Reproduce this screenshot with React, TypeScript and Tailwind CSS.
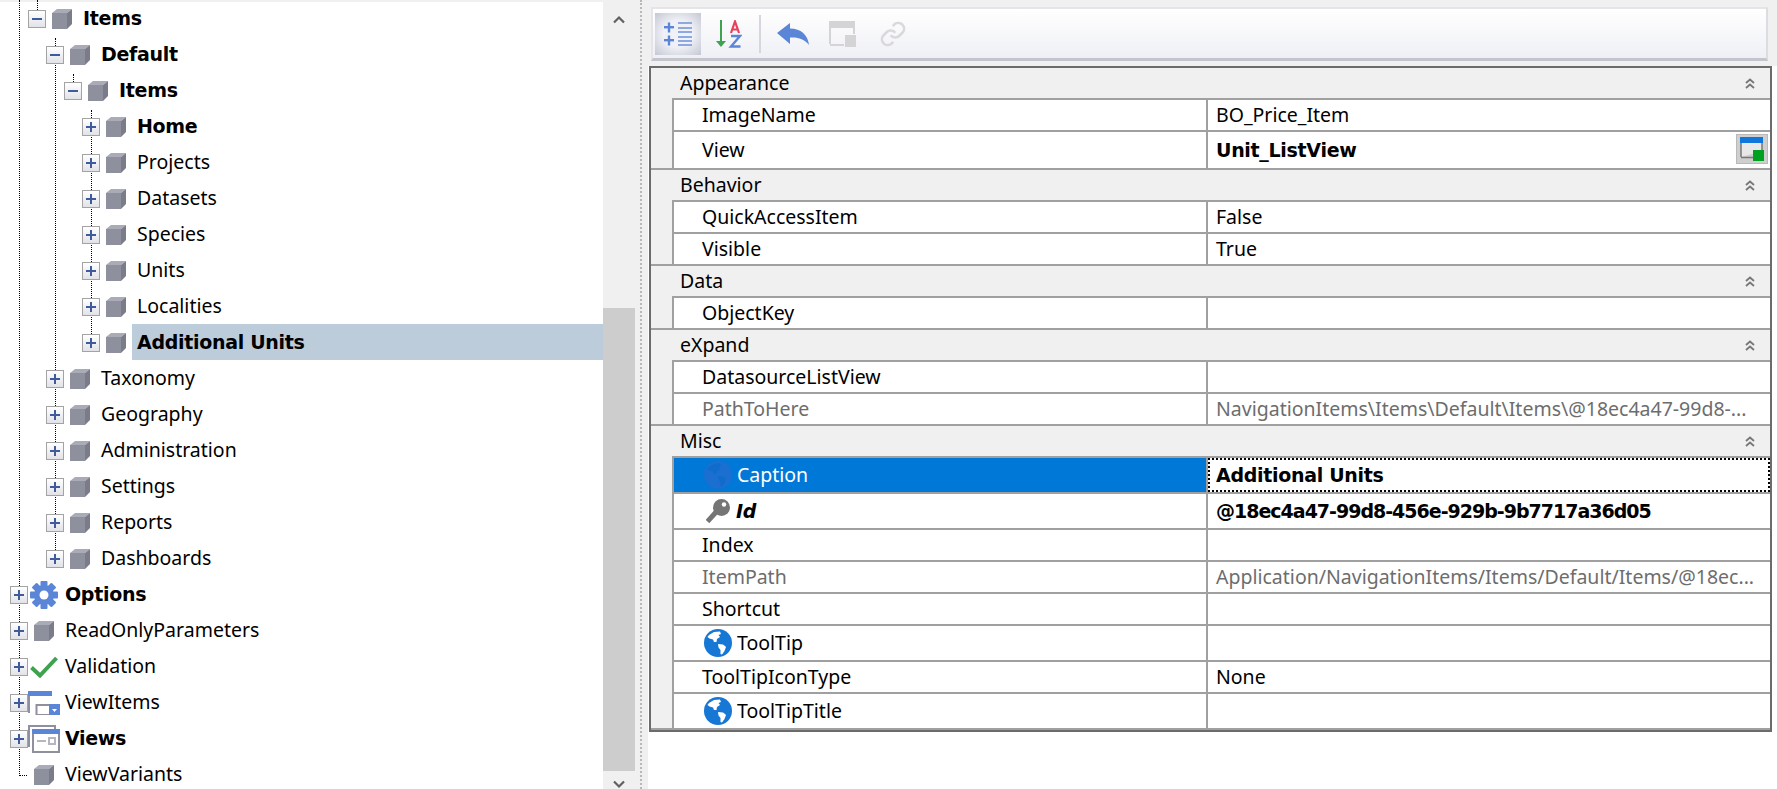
import React from 'react'

// bold text in the reference is much wider than Noto Sans Bold
const boldText = "font-['DejaVu_Sans',sans-serif] font-bold text-[19px] tracking-[-0.3px]"

const Cube = () => (
  <svg width="20" height="20" viewBox="0 0 20 20" className="block ml-[6px]">
    <polygon points="0,4 15,4 15,20 0,20" fill="#8e909e" />
    <polygon points="0,4 5,0 20,0 15,4" fill="#a9abb6" />
    <polygon points="15,4 20,0 20,15 15,20" fill="#7a7c8a" />
  </svg>
)

const Gear = () => {
  const teeth = [0, 45, 90, 135, 180, 225, 270, 315]
  return (
    <svg width="28" height="28" viewBox="0 0 28 28" className="block ml-[2px]">
      {teeth.map((a) => (
        <rect key={a} x="10.5" y="0" width="7" height="7" rx="1" fill="#5b85d6" transform={`rotate(${a} 14 14)`} />
      ))}
      <circle cx="14" cy="14" r="10" fill="#5b85d6" />
      <circle cx="14" cy="14" r="4.5" fill="#ffffff" />
    </svg>
  )
}

const Check = () => (
  <svg width="28" height="22" viewBox="0 0 28 22" className="block ml-[2px]">
    <path d="M1.5 11.5 L10 19.5 L26.5 2" fill="none" stroke="#3ea24f" strokeWidth="4" />
  </svg>
)

const ViewItemsIcon = () => (
  <svg width="32" height="24" viewBox="0 0 32 24" className="block">
    <path d="M1 22 V1 H24" fill="none" stroke="#8e909e" strokeWidth="2" />
    <rect x="0" y="0" width="24" height="5" fill="#5b85d6" />
    <rect x="8.5" y="14" width="23" height="10" fill="#ffffff" stroke="#8e909e" strokeWidth="2" />
    <rect x="21" y="13" width="11" height="11" fill="#5b85d6" />
    <polygon points="24,18 29,18 26.5,21" fill="#ffffff" />
  </svg>
)

const ViewsIcon = () => (
  <svg width="32" height="28" viewBox="0 0 32 28" className="block">
    <path d="M1 22 V1 H27 V4" fill="none" stroke="#8e909e" strokeWidth="2" />
    <rect x="5" y="5" width="26" height="22" fill="#ffffff" stroke="#8e909e" strokeWidth="2" />
    <rect x="4" y="4" width="28" height="5" fill="#5b85d6" />
    <rect x="9" y="15" width="9" height="2" fill="#b4b6c0" />
    <rect x="21" y="13" width="6" height="6" fill="none" stroke="#b4b6c0" strokeWidth="2" />
  </svg>
)

const Globe = ({ dim = false }: { dim?: boolean }) => {
  const land = dim ? '#0f6ccb' : '#ffffff'
  return (
    <svg width="28" height="28" viewBox="0 0 28 28" className="block">
      <circle cx="14" cy="14" r="14" fill={dim ? '#1a6fd0' : '#1677d4'} />
      <path d="M5 6 L10 3 L16 2.5 L17 5 L14.5 6 L16 8 L13 10 L12.5 13 L10 13 L9 10.5 L5.5 9.5 L3.5 8 Z" fill={land} />
      <path d="M14 15 L19 15.5 L21 17 L22 18 L20.5 22 L18 25.5 L16.5 25 L16.5 21 L14.5 18.5 Z" fill={land} />
    </svg>
  )
}

const Key = () => (
  <svg width="24" height="24" viewBox="0 0 24 24" className="block">
    <path d="M1.5 22.5 L11 12" stroke="#757575" strokeWidth="5" fill="none" />
    <circle cx="15.5" cy="8.5" r="8.5" fill="#757575" />
    <circle cx="18" cy="5.5" r="2.2" fill="#ffffff" />
  </svg>
)

const Expander = ({ open }: { open: boolean }) => (
  <div className="relative z-10 w-[18px] h-[18px] mt-[2px] shrink-0 border border-[#a3a3a3] bg-gradient-to-b from-white to-[#e2e3e8] flex items-center justify-center">
    <div className="relative w-[10px] h-[2px] bg-[#3f5b9c]">
      {!open && <div className="absolute left-[4px] top-[-4px] w-[2px] h-[10px] bg-[#3f5b9c]" />}
    </div>
  </div>
)

type TreeRow = {
  label: string
  level: number
  bold?: boolean
  open?: boolean
  leaf?: boolean
  selected?: boolean
  icon?: React.ReactNode
}

const treeRows: TreeRow[] = [
  { label: 'Items', level: 1, bold: true, open: true },
  { label: 'Default', level: 2, bold: true, open: true },
  { label: 'Items', level: 3, bold: true, open: true },
  { label: 'Home', level: 4, bold: true },
  { label: 'Projects', level: 4 },
  { label: 'Datasets', level: 4 },
  { label: 'Species', level: 4 },
  { label: 'Units', level: 4 },
  { label: 'Localities', level: 4 },
  { label: 'Additional Units', level: 4, bold: true, selected: true },
  { label: 'Taxonomy', level: 2 },
  { label: 'Geography', level: 2 },
  { label: 'Administration', level: 2 },
  { label: 'Settings', level: 2 },
  { label: 'Reports', level: 2 },
  { label: 'Dashboards', level: 2 },
  { label: 'Options', level: 0, bold: true, icon: <Gear /> },
  { label: 'ReadOnlyParameters', level: 0 },
  { label: 'Validation', level: 0, icon: <Check /> },
  { label: 'ViewItems', level: 0, icon: <ViewItemsIcon /> },
  { label: 'Views', level: 0, bold: true, icon: <ViewsIcon /> },
  { label: 'ViewVariants', level: 0, leaf: true },
]

const Tree = () => (
  <div className="relative w-[603px] shrink-0 h-full bg-white overflow-hidden">
    <div className="absolute left-0 right-0 top-0 h-[2px] bg-[#f0f0f0]" />
    {/* tree connector lines */}
    <div className="absolute left-[19px] top-0 h-[776px] border-l border-dotted border-black" />
    <div className="absolute left-[19px] top-[775px] w-[8px] border-t border-dotted border-black" />
    <div className="absolute left-[37px] top-0 h-[10px] border-l border-dotted border-black" />
    <div className="absolute left-[55px] top-[38px] h-[512px] border-l border-dotted border-black" />
    <div className="absolute left-[73px] top-[74px] h-[8px] border-l border-dotted border-black" />
    <div className="absolute left-[91px] top-[110px] h-[224px] border-l border-dotted border-black" />
    {treeRows.map((r, i) => (
      <div key={i} className="relative flex items-center h-9" style={{ paddingLeft: 10 + r.level * 18 }}>
        {r.leaf ? <div className="w-[18px] shrink-0" /> : <Expander open={!!r.open} />}
        <div className="relative z-10 w-[37px] shrink-0 flex items-center mt-[2px]">{r.icon ?? <Cube />}</div>
        <div
          className={
            r.selected
              ? `flex-1 h-full -ml-[5px] pl-[5px] bg-[#bdccdb] flex items-center ${boldText}`
              : r.bold
                ? boldText
                : ''
          }
        >
          {r.label}
        </div>
      </div>
    ))}
  </div>
)

const Scrollbar = () => (
  <div className="w-[37px] shrink-0 h-full bg-[#f0f0f0] flex flex-col">
    <div className="h-[308px] pt-[15px] pl-[10px]">
      <svg width="12" height="9" viewBox="0 0 12 9" className="block">
        <path d="M1 7.5 L6 2.5 L11 7.5" fill="none" stroke="#606060" strokeWidth="2.2" />
      </svg>
    </div>
    <div className="w-[32px] h-[463px] bg-[#cdcdcd]" />
    <div className="pt-[9px] pl-[10px]">
      <svg width="12" height="9" viewBox="0 0 12 9" className="block">
        <path d="M1 1.5 L6 6.5 L11 1.5" fill="none" stroke="#606060" strokeWidth="2.2" />
      </svg>
    </div>
  </div>
)

const Toolbar = () => (
  <div className="h-[66px] bg-[#f0f0f0] pl-[3px] pr-[9px] pt-[7px]">
    <div className="h-[54px] border-t-2 border-x-2 border-b-[3px] border-t-[#e4e4ea] border-l-[#e4e4ea] border-r-[#dcdce2] border-b-[#c4c4cc] bg-gradient-to-b from-white to-[#eff0f5] flex items-center pl-[2px]">
      <div className="w-[46px] h-[42px] bg-[radial-gradient(ellipse_at_center,_#f0f1f6_45%,_#c4c7d3_100%)] flex items-center justify-center">
        <svg width="28" height="24" viewBox="0 0 28 24" className="block">
          <g fill="#5b85d6">
            <rect x="0" y="4" width="10" height="2.4" />
            <rect x="3.8" y="0.5" width="2.4" height="10" />
            <rect x="0" y="17" width="10" height="2.4" />
            <rect x="3.8" y="13.5" width="2.4" height="10" />
          </g>
          <g fill="#8ea9e0">
            <rect x="14" y="0" width="14" height="2" />
            <rect x="14" y="5" width="14" height="2" />
            <rect x="14" y="9" width="14" height="2" />
            <rect x="14" y="14" width="14" height="2" />
            <rect x="14" y="18" width="14" height="2" />
            <rect x="14" y="22" width="14" height="2" />
          </g>
        </svg>
      </div>
      <svg width="26" height="28" viewBox="0 0 26 28" className="block ml-[15px]">
        <path d="M5 0 V24" stroke="#3ea24f" strokeWidth="2" fill="none" />
        <polygon points="0,21 10,21 5,27" fill="#3ea24f" />
        <path d="M15 13 L19 1.5 L23 13 M16.2 9.5 H21.8" stroke="#e8415e" strokeWidth="2.2" fill="none" />
        <path d="M15 16 H24 L15 26.5 H24.5" stroke="#5b85d6" strokeWidth="2.4" fill="none" />
      </svg>
      <div className="ml-[17px] w-[2px] h-[38px] bg-[#d6d6dc]" />
      <svg width="32" height="22" viewBox="0 0 32 22" className="block ml-[16px]">
        <path d="M0 10 L13 0 V5.5 C24 5.5 31 12 32 22 C27 15.5 21 14 13 14.5 V21 Z" fill="#5b85d6" />
      </svg>
      <svg width="27" height="26" viewBox="0 0 27 26" className="block ml-[20px]">
        <path d="M1 23 V1 H25 V13" fill="none" stroke="#d4d4d6" strokeWidth="2" />
        <path d="M1 24 H15" stroke="#d4d4d6" strokeWidth="2" />
        <rect x="0" y="0" width="26" height="7" fill="#d4d4d6" />
        <rect x="16" y="14" width="11" height="12" fill="#d4d4d6" />
      </svg>
      <svg width="28" height="28" viewBox="0 0 24 24" className="block ml-[23px]" fill="none" stroke="#d9d9dc" strokeWidth="2.2">
        <path d="M10 13a5 5 0 0 0 7.5.5l3-3a5 5 0 0 0-7-7l-1.7 1.7" />
        <path d="M14 11a5 5 0 0 0-7.5-.5l-3 3a5 5 0 0 0 7 7l1.7-1.7" />
      </svg>
    </div>
  </div>
)

const Collapse = () => (
  <svg width="10" height="11" viewBox="0 0 10 11" className="block">
    <path d="M1 5 L5 1.5 L9 5 M1 10 L5 6.5 L9 10" fill="none" stroke="#777777" strokeWidth="1.8" />
  </svg>
)

const Category = ({ name }: { name: string }) => (
  <div className="relative h-[32px] bg-[#f0f0f0] flex items-center pl-[29px] pr-[15px] justify-between">
    <span className="-mt-[2px]">{name}</span>
    <div className="-mt-[2px]"><Collapse /></div>
    <div className="absolute left-[21px] right-0 bottom-0 h-[2px] bg-[#a0a0a0]" />
  </div>
)

type PropRow = {
  name: string
  value?: string
  icon?: React.ReactNode
  tall?: boolean
  grey?: boolean
  boldValue?: boolean
  italic?: boolean
  selected?: boolean
  focus?: boolean
  button?: boolean
  last?: boolean
}

const Row = ({ name, value, icon, tall, grey, boldValue, italic, selected, focus, button, last }: PropRow) => (
  <div className={`flex ${button ? 'h-[38px]' : tall ? 'h-[36px]' : 'h-[32px]'} ${last ? 'border-b-2 border-[#a0a0a0]' : ''}`}>
    <div className="w-[21px] shrink-0 bg-[#f0f0f0]" />
    <div
      className={`w-[534px] shrink-0 border-l-2 border-[#a0a0a0] flex items-center ${last ? '' : 'border-b-2'} ${
        selected ? 'bg-[#0078d7] text-white' : 'bg-white'
      } ${icon ? 'pl-[30px]' : 'pl-[28px]'} ${grey ? 'text-[#6d6d6d]' : ''}`}
    >
      {icon && <div className={`${italic ? 'w-[32px] pl-[2px]' : 'w-[33px]'} shrink-0`}>{icon}</div>}
      <span className={italic ? `${boldText} italic` : ''}>{name}</span>
    </div>
    <div
      className={`relative flex-1 min-w-0 border-l-2 border-[#a0a0a0] bg-white flex items-center pl-[8px] whitespace-nowrap overflow-hidden ${
        last ? '' : 'border-b-2'
      } ${grey ? 'text-[#6d6d6d]' : ''} ${boldValue ? boldText : ''}`}
    >
      {/* the guid has wide digits in DejaVu, pull it in */}
      <span className={italic ? 'tracking-[-1px]' : ''}>{value}</span>
      {focus && <div className="absolute inset-0 border-2 border-dotted border-black" />}
      {button && (
        <div className="absolute right-[2px] top-[2px] w-[32px] h-[30px] bg-[#cfcfcf] border border-[#b9b9b9] flex items-center justify-center">
          <svg width="24" height="24" viewBox="0 0 24 24" className="block">
            <path d="M1 20 V4 H22 V14" fill="#e8e8e8" stroke="#777777" strokeWidth="1.5" />
            <path d="M1 20.5 H13" stroke="#777777" strokeWidth="1.5" />
            <rect x="0" y="0" width="23" height="6" fill="#0f76dc" />
            <rect x="13" y="13" width="11" height="11" fill="#00a020" />
          </svg>
        </div>
      )}
    </div>
  </div>
)

const PropertyGrid = () => (
  <div className="mr-[5px] ml-[1px] border-2 border-[#6b6b6b] bg-white">
    <Category name="Appearance" />
    <Row name="ImageName" value="BO_Price_Item" />
    <Row name="View" value="Unit_ListView" boldValue button last />
    <Category name="Behavior" />
    <Row name="QuickAccessItem" value="False" />
    <Row name="Visible" value="True" last />
    <Category name="Data" />
    <Row name="ObjectKey" last />
    <Category name="eXpand" />
    <Row name="DatasourceListView" />
    <Row name="PathToHere" value="NavigationItems\Items\Default\Items\@18ec4a47-99d8-..." grey last />
    <Category name="Misc" />
    <Row name="Caption" value="Additional Units" icon={<Globe dim />} tall selected boldValue focus />
    <Row name="Id" value="@18ec4a47-99d8-456e-929b-9b7717a36d05" icon={<Key />} tall italic boldValue />
    <Row name="Index" />
    <Row name="ItemPath" value="Application/NavigationItems/Items/Default/Items/@18ec..." grey />
    <Row name="Shortcut" />
    <Row name="ToolTip" icon={<Globe />} tall />
    <Row name="ToolTipIconType" value="None" />
    <Row name="ToolTipTitle" icon={<Globe />} tall last />
  </div>
)

export default function App() {
  return (
    <div className="flex w-[1777px] h-[789px] overflow-hidden bg-white text-black text-[19.5px] font-['Noto_Sans',sans-serif]">
      <Tree />
      <Scrollbar />
      <div className="w-[8px] shrink-0 h-full bg-[#f0f0f0] border-l-2 border-dotted border-[#b8b8b8]" />
      <div className="flex-1 min-w-0 h-full">
        <Toolbar />
        <PropertyGrid />
      </div>
    </div>
  )
}
